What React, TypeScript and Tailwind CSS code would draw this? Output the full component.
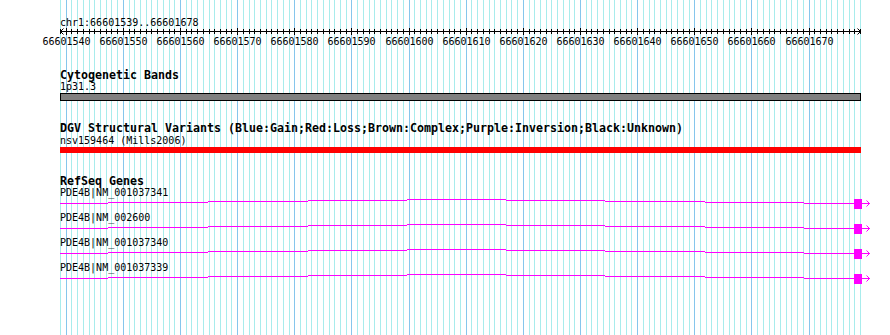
const START = 66601539;
const END = 66601678;
const X0 = 60;
const SCALE = 800 / (END - START + 1);

// base pair -> pixel column
const px = (bp: number) => Math.round(X0 + (bp - START) * SCALE);

const MONO = "font-['DejaVu_Sans_Mono',monospace]";

const genes = ["PDE4B|NM_001037341", "PDE4B|NM_002600", "PDE4B|NM_001037340", "PDE4B|NM_001037339"];

// intron line is a very shallow hat, drawn as stepped 1px segments
const steps: [number, number, number][] = [
  [60, 108, 4],
  [108, 208, 3],
  [208, 308, 2],
  [308, 407, 1],
  [407, 506, 0],
  [506, 605, 1],
  [605, 705, 2],
  [705, 804, 3],
  [804, 854, 4],
];

function Grid() {
  const lines = [];
  for (let bp = START; bp <= END + 1; bp++) {
    const major = bp % 10 === 0;
    lines.push(
      <rect key={bp} x={px(bp)} y={0} width={1} height={335} fill={major ? "#86c6ec" : "#a8ecec"} />
    );
  }
  return (
    <svg className="absolute inset-0" width={890} height={335} shapeRendering="crispEdges">
      {lines}
    </svg>
  );
}

function Ruler() {
  const ticks = [];
  const labels = [];
  for (let bp = START; bp <= END + 1; bp++) {
    const major = bp % 10 === 0;
    ticks.push(
      <rect key={bp} x={px(bp)} y={major ? 0 : 1} width={1} height={major ? 7 : 5} fill="#000" />
    );
    if (major && bp <= END) {
      labels.push(
        <text key={bp} x={px(bp) + 0.5} y={17} textAnchor="middle" fontSize={10} fill="#000">
          {bp}
        </text>
      );
    }
  }
  return (
    <svg width={890} height={21} className={MONO}>
      <g shapeRendering="crispEdges">
        <rect x={60} y={3} width={801} height={1} fill="#000" />
        {ticks}
      </g>
      <polyline points="63.5,0.5 60.5,3.5 63.5,6.5" fill="none" stroke="#000" strokeWidth={1} />
      <polyline points="857.5,0.5 860.5,3.5 857.5,6.5" fill="none" stroke="#000" strokeWidth={1} />
      {labels}
    </svg>
  );
}

function GeneGlyph() {
  return (
    <svg width={890} height={14} className="block">
      <g shapeRendering="crispEdges" fill="#ff00ff">
        {steps.map(([a, b, dy]) => (
          <rect key={a} x={a} y={1 + dy} width={b - a} height={1} />
        ))}
        <rect x={854} y={1} width={8} height={10} />
        <rect x={862} y={5} width={8} height={1} />
      </g>
      <polyline points="866.5,2.5 869.5,5.5 866.5,8.5" fill="none" stroke="#ff00ff" strokeWidth={1} />
    </svg>
  );
}

export default function App() {
  return (
    <div className={`relative w-[890px] h-[335px] bg-white overflow-hidden text-black ${MONO}`}>
      <Grid />
      <div className="relative flex flex-col">
        <div className="ml-[60px] mt-[17px] h-[11px] leading-[11px] text-[10px] whitespace-nowrap">
          chr1:66601539..66601678
        </div>
        <Ruler />

        {/* Cytogenetic Bands */}
        <div className="ml-[60px] mt-[20px] h-[12px] leading-[12px] text-[11.63px] font-bold whitespace-nowrap">
          Cytogenetic Bands
        </div>
        <div className="ml-[60px] h-[11px] leading-[11px] text-[10px] whitespace-nowrap">1p31.3</div>
        <div className="ml-[60px] mt-[1px] w-[801px] h-[8px] border border-black bg-[#808080]" />

        {/* DGV */}
        <div className="ml-[60px] mt-[21px] h-[12px] leading-[12px] text-[11.63px] font-bold whitespace-nowrap">
          DGV Structural Variants (Blue:Gain;Red:Loss;Brown:Complex;Purple:Inversion;Black:Unknown)
        </div>
        <div className="ml-[60px] mt-[1px] h-[11px] leading-[11px] text-[10px] whitespace-nowrap">
          nsv159464 (Mills2006)
        </div>
        <div className="ml-[60px] mt-[1px] w-[801px] h-[6px] bg-[#ff0000]" />

        {/* RefSeq */}
        <div className="ml-[60px] mt-[22px] h-[12px] leading-[12px] text-[11.63px] font-bold whitespace-nowrap">
          RefSeq Genes
        </div>
        {genes.map((g) => (
          <div key={g} className="flex flex-col">
            <div className="ml-[60px] h-[11px] leading-[11px] text-[10px] whitespace-nowrap">{g}</div>
            <GeneGlyph />
          </div>
        ))}
      </div>
    </div>
  );
}
